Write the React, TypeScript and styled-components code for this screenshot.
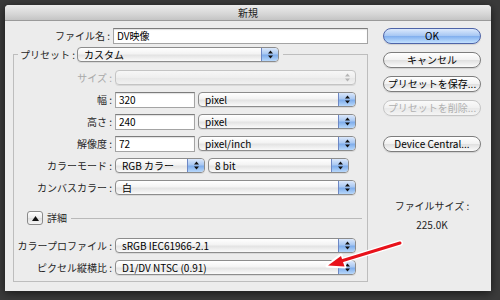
import React from 'react';
import styled, {createGlobalStyle} from 'styled-components';

const GlobalStyle = createGlobalStyle`
  html, body {
    margin: 0;
    padding: 0;
    background: #3b3b3b;
  }
  body {
    width: 500px;
    height: 300px;
    overflow: hidden;
    font-family: "Noto Sans CJK JP", "Noto Sans", sans-serif;
  }
`

const Page = styled.div`
  padding: 5px 0 0 5px;
`

const Dialog = styled.div`
  position: relative;
  width: 486px;
  height: 286px;
  display: flex;
  flex-direction: column;
  background: #ececec;
  border-radius: 4px 4px 0 0;
  box-shadow: 0 2px 10px rgba(0, 0, 0, 0.6);
  overflow: hidden;
`

const TitleBar = styled.div`
  height: 15px;
  flex: none;
  display: flex;
  align-items: center;
  justify-content: center;
  background: linear-gradient(#ececec, #d6d6d6 60%, #c4c4c4);
  border-bottom: 1px solid #9a9a9a;
  color: #222;
  font-size: 10px;
  line-height: 1;
`

const Body = styled.div`
  flex: 1;
  display: flex;
  gap: 15px;
  padding: 7px 10px 0 8px;
`

const LeftColumn = styled.div`
  width: 355px;
  display: flex;
  flex-direction: column;
`

const RightColumn = styled.div`
  width: 98px;
  display: flex;
  flex-direction: column;
  align-items: center;
`

const Row = styled.div<{ $gap?: number }>`
  display: flex;
  align-items: center;
  height: 15px;
  gap: ${p => p.$gap ?? 3}px;
`

const Label = styled.span<{ $w?: number; $disabled?: boolean }>`
  width: ${p => (p.$w ? `${p.$w}px` : 'auto')};
  flex: none;
  text-align: right;
  font-size: 10px;
  line-height: 1;
  white-space: nowrap;
  color: ${p => (p.$disabled ? '#a8a8a8' : '#262626')};
`

const TextField = styled.input<{ $w?: number }>`
  box-sizing: border-box;
  height: 16px;
  width: ${p => (p.$w ? `${p.$w}px` : 'auto')};
  flex: ${p => (p.$w ? 'none' : 1)};
  min-width: 0;
  margin: 0;
  padding: 0 3px;
  border: 1px solid #a4a4a4;
  border-top-color: #7c7c7c;
  box-shadow: inset 0 1px 1px rgba(0, 0, 0, 0.12);
  background: #fff;
  font-family: inherit;
  font-size: 10px;
  color: #000;
  outline: none;
`

const PopUp = styled.div<{ $w?: number; $disabled?: boolean }>`
  box-sizing: border-box;
  height: 15px;
  width: ${p => (p.$w ? `${p.$w}px` : 'auto')};
  flex: ${p => (p.$w ? 'none' : 1)};
  display: flex;
  align-items: center;
  padding-left: 6px;
  border: 1px solid ${p => (p.$disabled ? '#c4c4c4' : '#8c8c8c')};
  border-radius: 4px;
  background: ${p => (p.$disabled
    ? 'linear-gradient(#f7f7f7, #eeeeee 50%, #e6e6e6 51%, #f1f1f1)'
    : 'linear-gradient(#ffffff, #f3f3f3 45%, #e3e3e3 55%, #fafafa)')};
  box-shadow: 0 1px 0 rgba(0, 0, 0, 0.08);
  font-size: 10px;
  line-height: 1;
  color: #000;
  white-space: nowrap;
  overflow: hidden;
`

const PopUpText = styled.span`
  flex: 1;
`

const ArrowCap = styled.span<{ $disabled?: boolean }>`
  align-self: stretch;
  width: 16px;
  flex: none;
  display: flex;
  align-items: center;
  justify-content: center;
  border-radius: 0 3px 3px 0;
  border-left: 1px solid ${p => (p.$disabled ? 'transparent' : '#6d87c4')};
  background: ${p => (p.$disabled
    ? 'transparent'
    : 'linear-gradient(#dbe8fb, #a9c8f2 45%, #7fadeb 55%, #b8d8fb)')};
`

const Fieldset = styled.fieldset`
  margin: 4px 0 0 0;
  padding: 0 9px 6px 0;
  border: 1px solid #bdbdbd;
  border-radius: 0;
  min-width: 0;
`

const Legend = styled.legend`
  margin-left: 4px;
  padding: 0 4px 0 2px;
`

const Rows = styled.div`
  display: flex;
  flex-direction: column;
  gap: 7px;
  padding-top: 8px;
`

const DisclosureRow = styled.div`
  display: flex;
  align-items: center;
  gap: 4px;
  height: 14px;
  margin: 16px 0 5px 13px;
`

const DisclosureButton = styled.span`
  box-sizing: border-box;
  width: 16px;
  height: 14px;
  display: flex;
  align-items: center;
  justify-content: center;
  border: 1px solid #8a8a8a;
  border-radius: 3px;
  background: linear-gradient(#ffffff, #ececec 50%, #dedede 51%, #f6f6f6);
`

const Rule = styled.span`
  flex: 1;
  height: 1px;
  margin-right: -4px;
  background: #b9b9b9;
`

const PushButton = styled.div<{ $default?: boolean; $disabled?: boolean }>`
  box-sizing: border-box;
  width: 98px;
  height: 16px;
  display: flex;
  align-items: center;
  justify-content: center;
  border-radius: 8px;
  font-size: 10px;
  line-height: 1;
  white-space: nowrap;
  color: ${p => (p.$disabled ? '#b0b0b0' : '#000')};
  border: 1px solid ${p => (p.$default ? '#4e64a8' : p.$disabled ? '#c6c6c6' : '#7d7d7d')};
  background: ${p => (p.$default
    ? 'linear-gradient(#dce9fc, #a7c7f3 48%, #81afee 52%, #c3e1ff)'
    : p.$disabled
      ? 'linear-gradient(#fafafa, #f0f0f0 50%, #e9e9e9 51%, #f4f4f4)'
      : 'linear-gradient(#ffffff, #f2f2f2 48%, #e0e0e0 52%, #fbfbfb)')};
  box-shadow: 0 1px 1px rgba(0, 0, 0, ${p => (p.$disabled ? 0.03 : 0.12)});
`

const ButtonStack = styled.div`
  display: flex;
  flex-direction: column;
  gap: 8px;
`

const SizeInfo = styled.div`
  margin-top: 49px;
  display: flex;
  flex-direction: column;
  align-items: center;
  gap: 9px;
  font-size: 10px;
  line-height: 1;
  color: #262626;
`

const Annotation = styled.svg`
  position: absolute;
  left: 0;
  top: 0;
  pointer-events: none;
`

const Steppers = ({disabled}: { disabled?: boolean }) => (
  <svg width="5" height="9" viewBox="0 0 5 9">
    <path d="M2.5 0.5 L5 3.5 L0 3.5 Z M2.5 8.5 L5 5.5 L0 5.5 Z" fill={disabled ? '#b5b5b5' : '#111'}/>
  </svg>
)

type PopUpProps = {
  text?: string
  w?: number
  disabled?: boolean
}

const Select = ({text, w, disabled}: PopUpProps) => (
  <PopUp $w={w} $disabled={disabled}>
    <PopUpText>{text}</PopUpText>
    <ArrowCap $disabled={disabled}><Steppers disabled={disabled}/></ArrowCap>
  </PopUp>
)

const FIELD_LABEL = 98

export default function App() {
  return (
    <Page>
      <GlobalStyle/>
      <Dialog>
        <TitleBar>新規</TitleBar>
        <Body>
          <LeftColumn>
            <Row>
              <Label $w={97}>ファイル名 :</Label>
              <TextField readOnly value="DV映像"/>
            </Row>

            <Fieldset>
              <Legend>
                <Row $gap={2}>
                  <Label>プリセット :</Label>
                  <Select text="カスタム" w={202}/>
                </Row>
              </Legend>
              <Rows>
                <Row>
                  <Label $w={FIELD_LABEL} $disabled>サイズ :</Label>
                  <Select w={241} disabled/>
                </Row>
                <Row>
                  <Label $w={FIELD_LABEL}>幅 :</Label>
                  <TextField readOnly value="320" $w={80}/>
                  <Select text="pixel" w={158}/>
                </Row>
                <Row>
                  <Label $w={FIELD_LABEL}>高さ :</Label>
                  <TextField readOnly value="240" $w={80}/>
                  <Select text="pixel" w={158}/>
                </Row>
                <Row>
                  <Label $w={FIELD_LABEL}>解像度 :</Label>
                  <TextField readOnly value="72" $w={80}/>
                  <Select text="pixel/inch" w={158}/>
                </Row>
                <Row>
                  <Label $w={FIELD_LABEL}>カラーモード :</Label>
                  <Select text="RGB カラー" w={90}/>
                  <Select text="8 bit" w={141}/>
                </Row>
                <Row>
                  <Label $w={FIELD_LABEL}>カンバスカラー :</Label>
                  <Select text="白" w={241}/>
                </Row>
              </Rows>

              <DisclosureRow>
                <DisclosureButton>
                  <svg width="7" height="5" viewBox="0 0 7 5">
                    <path d="M3.5 0 L7 5 L0 5 Z" fill="#111"/>
                  </svg>
                </DisclosureButton>
                <Label>詳細</Label>
                <Rule/>
              </DisclosureRow>

              <Rows>
                <Row>
                  <Label $w={FIELD_LABEL}>カラープロファイル :</Label>
                  <Select text="sRGB IEC61966-2.1" w={241}/>
                </Row>
                <Row>
                  <Label $w={FIELD_LABEL}>ピクセル縦横比 :</Label>
                  <Select text="D1/DV NTSC (0.91)" w={241}/>
                </Row>
              </Rows>
            </Fieldset>
          </LeftColumn>

          <RightColumn>
            <ButtonStack>
              <PushButton $default>OK</PushButton>
              <PushButton>キャンセル</PushButton>
              <PushButton>プリセットを保存...</PushButton>
              <PushButton $disabled>プリセットを削除...</PushButton>
              <PushButton style={{marginTop: 12}}>Device Central...</PushButton>
            </ButtonStack>
            <SizeInfo>
              <span>ファイルサイズ :</span>
              <span>225.0K</span>
            </SizeInfo>
          </RightColumn>
        </Body>

        <Annotation width="486" height="286" viewBox="0 0 486 286">
          <g transform="translate(-5 -5)">
            <path d="M400 243 L338 262" stroke="#fff" strokeWidth="6" strokeLinecap="round"/>
            <path d="M327 266 L341 255 L345 267 Z" fill="#fff" stroke="#fff" strokeWidth="3" strokeLinejoin="round"/>
            <path d="M400 243 L338 262" stroke="#e8121b" strokeWidth="3" strokeLinecap="round"/>
            <path d="M328 265.5 L341 256 L344.5 266.5 Z" fill="#e8121b"/>
          </g>
        </Annotation>
      </Dialog>
    </Page>
  );
}
